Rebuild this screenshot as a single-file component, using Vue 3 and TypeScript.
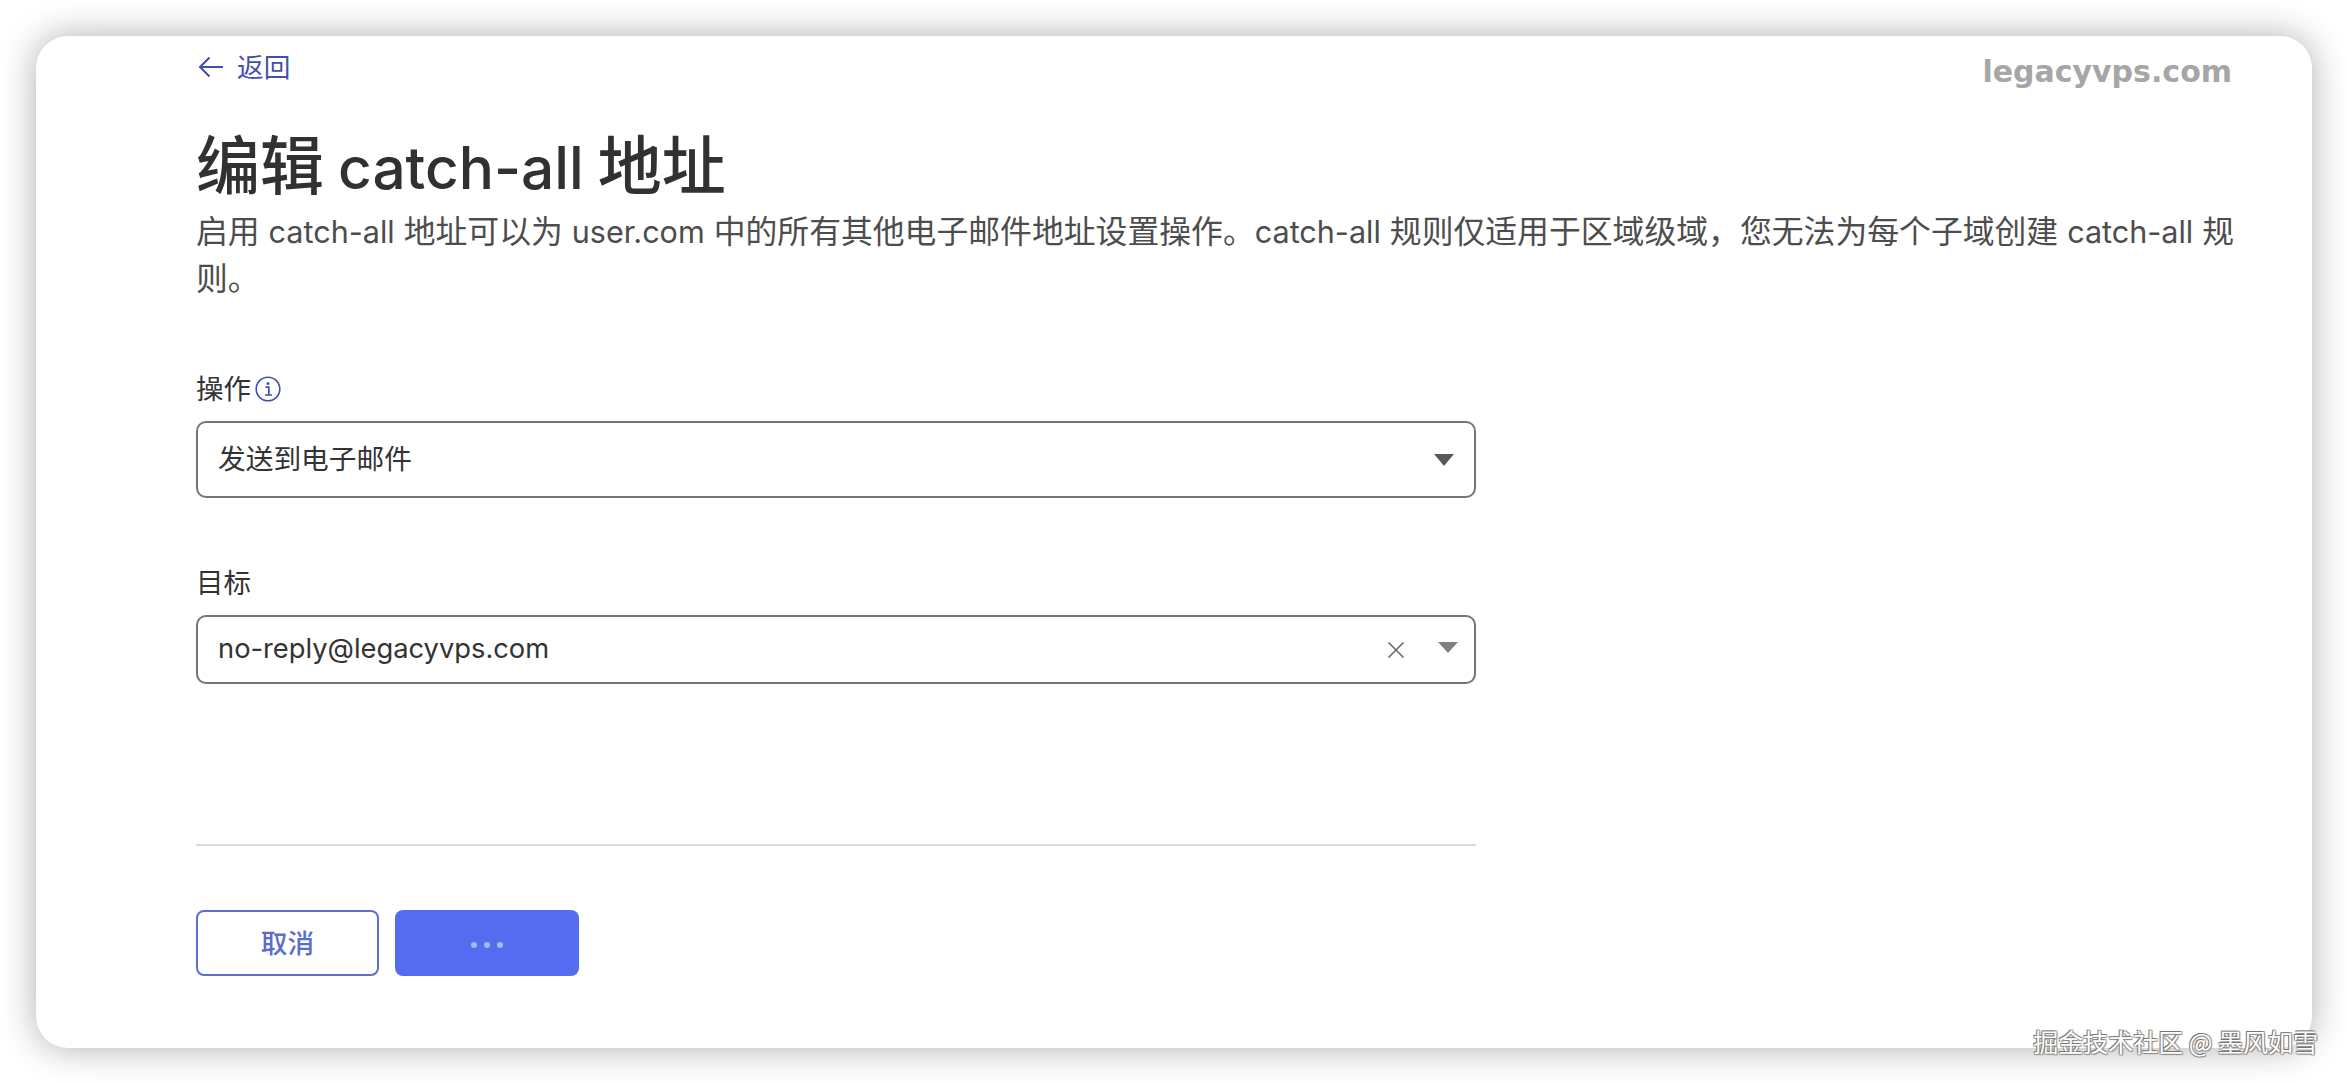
<script setup lang="ts">
const siteName = 'legacyvps.com';
</script>

<template>
  <div class="page">
    <main class="card">
      <span class="site-mark">{{ siteName }}</span>
      <a class="back">
        <svg class="back-icon" viewBox="0 0 26 22" width="26" height="22" fill="none" stroke="currentColor" stroke-width="2">
          <path d="M25 11H2.5M11.5 1.5 2 11l9.5 9.5" />
        </svg>
        <span>返回</span>
      </a>
      <h1 class="title">编辑 <span class="latin">catch-all</span> 地址</h1>
      <p class="desc">启用 <span class="latin">catch-all</span> 地址可以为 <span class="latin">user.com</span> 中的所有其他电子邮件地址设置操作。<span class="latin">catch-all</span> 规则仅适用于区域级域，您无法为每个子域创建 <span class="latin">catch-all</span> 规则。</p>

      <form class="form">
        <div class="label-row">
          <label class="label">操作</label>
          <svg class="info" viewBox="0 0 26 26" width="26" height="26" fill="none">
            <circle cx="13" cy="13" r="11.8" stroke="currentColor" stroke-width="1.6" />
            <circle cx="13" cy="7.4" r="1.5" fill="currentColor" />
            <path d="M10.4 11.2h3.4v7.4M10 19h7" stroke="currentColor" stroke-width="1.7" />
          </svg>
        </div>
        <div class="select select-action">
          <span>发送到电子邮件</span>
          <i class="caret caret-dark"></i>
        </div>

        <label class="label label-target">目标</label>
        <div class="select select-target">
          <span class="value">no-reply@legacyvps.com</span>
          <svg class="clear" viewBox="0 0 16 16" width="16" height="16" fill="none" stroke="#666" stroke-width="1.5">
            <path d="M.5.5l15 15M15.5.5l-15 15" />
          </svg>
          <i class="caret caret-light"></i>
        </div>

        <hr class="divider" />

        <div class="actions">
          <button type="button" class="btn btn-cancel">取消</button>
          <button type="button" class="btn btn-primary" aria-label="加载中">
            <i class="dot"></i><i class="dot"></i><i class="dot"></i>
          </button>
        </div>
      </form>
    </main>
    <span class="watermark">掘金技术社区 @ 墨风如雪</span>
  </div>
</template>

<style>
html, body { margin: 0; background: #fff; }
</style>

<style scoped>
.page {
  position: relative;
  width: 2348px;
  height: 1084px;
  box-sizing: border-box;
  padding: 36px;
  overflow: hidden;
  background: #fff;
  font-family: Inter, "Noto Sans CJK SC", sans-serif;
}
.card {
  position: relative;
  box-sizing: border-box;
  height: 1012px;
  padding: 16px 76px 0 160px;
  background: #fff;
  border-radius: 32px;
  box-shadow: 0 0 36px rgba(0, 0, 0, 0.32);
}
.site-mark {
  position: absolute;
  top: 15px;
  right: 80px;
  color: #a6a6a6;
  font-family: "DejaVu Sans", sans-serif;
  font-size: 30px;
  font-weight: 700;
  line-height: 42px;
}
.back {
  display: flex;
  align-items: center;
  gap: 13px;
  height: 30px;
  color: #3f51ab;
  font-size: 26.67px;
  line-height: 30px;
}
.back-icon { margin-left: 2px; }
.title {
  margin: 48px 0 0;
  color: #313131;
  font-size: 64px;
  font-weight: 500;
  line-height: 72px;
  word-spacing: -3px;
}
.title .latin { font-size: 58.5px; }
.desc {
  margin: 5px 0 0;
  color: #4d4d4d;
  font-size: 31.83px;
  line-height: 46.5px;
}
.desc .latin { font-size: 30.55px; }
.form {
  width: 1280px;
  margin-top: 71px;
  display: flex;
  flex-direction: column;
}
.label-row {
  display: flex;
  align-items: center;
  gap: 4px;
  height: 32px;
}
.label {
  color: #333;
  font-size: 27.5px;
  line-height: 32px;
}
.info { color: #3f51ab; }
.select {
  display: flex;
  align-items: center;
  box-sizing: border-box;
  margin-top: 16px;
  padding: 0 20px 0 20px;
  border: 2px solid #757575;
  border-radius: 10px;
  color: #333;
  font-size: 27.7px;
}
.select-action { height: 77px; justify-content: space-between; padding-bottom: 6px; }
.select-action .caret { margin-top: 6px; }
.select-target { height: 69px; margin-top: 16px; padding-bottom: 2px; }
.label-target { margin-top: 69px; display: block; }
.value { flex: 1; font-size: 27.3px; }
.clear { margin-right: 34px; margin-top: 2px; }
.caret {
  display: block;
  width: 0;
  height: 0;
  border-left: 10px solid transparent;
  border-right: 10px solid transparent;
}
.caret-dark { border-top: 12px solid #595959; margin-right: 0; }
.caret-light { border-top: 11px solid #808080; margin-right: -4px; margin-top: -3px; }
.divider {
  width: 100%;
  height: 2px;
  margin: 160px 0 0;
  border: 0;
  background: #d9d9d9;
}
.actions {
  display: flex;
  gap: 16px;
  margin-top: 64px;
}
.btn {
  display: flex;
  align-items: center;
  justify-content: center;
  box-sizing: border-box;
  height: 66px;
  padding: 0;
  border-radius: 8px;
  font-family: inherit;
  font-size: 26.67px;
  font-weight: 500;
}
.btn-cancel {
  width: 183px;
  border: 2px solid #5d6fcf;
  background: #fff;
  color: #5a6ecc;
  padding-bottom: 4px;
}
.btn-primary {
  width: 184px;
  gap: 7px;
  border: 0;
  background: #566cf0;
  padding-top: 4px;
}
.dot {
  display: block;
  width: 6px;
  height: 6px;
  border-radius: 50%;
  background: #a9b8f8;
}
.watermark {
  position: absolute;
  right: 30px;
  bottom: 27px;
  color: #fff;
  font-size: 25px;
  line-height: 32px;
  font-family: "Noto Sans CJK SC", sans-serif;
  text-shadow: -1px -1px 0 #777, 1px 1px 1px #888, -1px 1px 0 #aaa, 1px -1px 0 #aaa;
}
</style>
